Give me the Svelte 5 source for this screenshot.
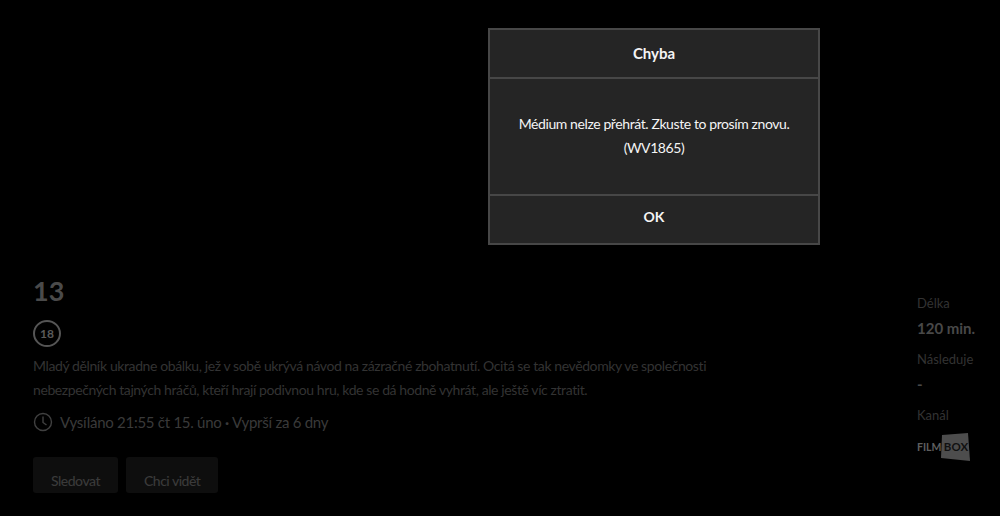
<script>
  const details = [
    { label: "Délka", value: "120 min." },
    { label: "Následuje", value: "-" }
  ]
</script>

<div class="page">
  <div class="detail">
    <section class="info">
      <h1>13</h1>
      <span class="rating">18</span>
      <p class="desc">Mladý dělník ukradne obálku, jež v sobě ukrývá návod na zázračné zbohatnutí. Ocitá se tak nevědomky ve společnosti nebezpečných tajných hráčů, kteří hrají podivnou hru, kde se dá hodně vyhrát, ale ještě víc ztratit.</p>
      <div class="airing">
        <svg class="clock" width="20" height="20" viewBox="0 0 20 20" fill="none" stroke="currentColor" stroke-width="1.4">
          <circle cx="10" cy="10" r="8.5" />
          <path d="M10 4.5V10.5L13.5 13" />
        </svg>
        <span>Vysíláno 21:55 čt 15. úno <b>·</b> Vyprší za 6 dny</span>
      </div>
      <div class="actions">
        <button>Sledovat</button>
        <button>Chci vidět</button>
      </div>
    </section>

    <aside class="side">
      {#each details as d}
        <div class="label">{d.label}</div>
        <div class="value">{d.value}</div>
      {/each}
      <div class="label">Kanál</div>
      <div class="logo">
        <span class="film">FILM</span>
        <span class="box">
          <svg width="30" height="28" viewBox="0 0 30 28"><path d="M1 2L27 0L29 28L0 25Z" fill="#4d4d4d" /></svg>
          <span>BOX</span>
        </span>
      </div>
    </aside>
  </div>

  <div class="modal">
    <header>Chyba</header>
    <div class="body">
      <p>Médium nelze přehrát. Zkuste to prosím znovu.</p>
      <p>(WV1865)</p>
    </div>
    <button class="ok">OK</button>
  </div>
</div>

<style>
  :global(body) {
    background: #000;
  }

  .page {
    position: relative;
    width: 1000px;
    height: 516px;
    overflow: hidden;
    background: #000;
    font-family: Lato, "Noto Sans", sans-serif;
    color: #3d3d3d;
  }

  .detail {
    display: flex;
    justify-content: space-between;
    padding: 276px 25px 0 33px;
  }

  .info {
    width: 690px;
  }

  h1 {
    margin: 0 0 14px;
    font-size: 27px;
    line-height: 30px;
    font-weight: 700;
    color: #4a4a4a;
  }

  .rating {
    display: flex;
    align-items: center;
    justify-content: center;
    box-sizing: border-box;
    width: 28px;
    height: 27px;
    border: 2px solid #555;
    border-radius: 50%;
    font-size: 12px;
    font-weight: 700;
    color: #5a5a5a;
  }

  .desc {
    margin: 7px 0 0;
    font-size: 14px;
    letter-spacing: -0.4px;
    line-height: 24px;
    color: #333;
  }

  .airing {
    display: flex;
    align-items: center;
    gap: 7px;
    margin-top: 8px;
    font-size: 15px;
    letter-spacing: -0.27px;
    line-height: 24px;
    color: #3a3a3a;
  }

  .clock {
    color: #404040;
  }

  .actions {
    display: flex;
    gap: 8px;
    margin-top: 23px;
  }

  .actions button {
    height: 36px;
    padding: 11px 18px 0;
    border: 0;
    border-radius: 3px;
    background: #0e0e0e;
    color: #3a3a3a;
    font: 500 14px/20px Lato, sans-serif;
    letter-spacing: -0.5px;
  }

  .side {
    width: 58px;
    padding-top: 18px;
    flex: none;
    white-space: nowrap;
  }

  .label {
    font-size: 13px;
    line-height: 18px;
    color: #333;
  }

  .value {
    margin: 7px 0 13px;
    font-size: 15px;
    line-height: 18px;
    font-weight: 700;
    color: #484848;
  }

  .logo {
    display: flex;
    align-items: center;
    margin-top: 9px;
    font-size: 11.5px;
    line-height: 14px;
    font-weight: 700;
  }

  .film {
    width: 24px;
    flex: none;
    color: #5e5e5e;
    font-size: 10.5px;
  }

  .box {
    position: relative;
    display: flex;
    align-items: center;
    justify-content: center;
    width: 30px;
    height: 28px;
    color: #111;
  }

  .box svg {
    position: absolute;
    inset: 0;
  }

  .box span {
    position: relative;
  }

  .modal {
    position: absolute;
    left: 488px;
    top: 28px;
    box-sizing: border-box;
    width: 332px;
    height: 217px;
    display: flex;
    flex-direction: column;
    border: 2px solid #474747;
    background: #252525;
    color: #f4f4f4;
    text-align: center;
  }

  header {
    height: 47px;
    flex: none;
    font-size: 15px;
    font-weight: 700;
    line-height: 46px;
    border-bottom: 2px solid #474747;
  }

  .body {
    flex: 1;
    display: flex;
    flex-direction: column;
    justify-content: center;
    padding-bottom: 1px;
    font-size: 14px;
    letter-spacing: -0.4px;
    line-height: 24px;
  }

  .body p {
    margin: 0;
  }

  .ok {
    height: 49px;
    flex: none;
    padding: 0 0 5px;
    border: 0;
    border-top: 2px solid #474747;
    background: transparent;
    color: #f4f4f4;
    font: 700 14px/42px Lato, sans-serif;
  }
</style>
